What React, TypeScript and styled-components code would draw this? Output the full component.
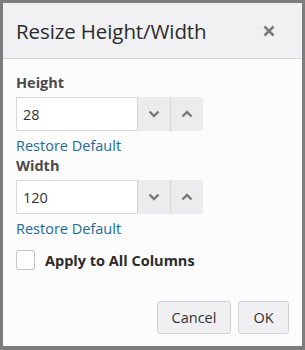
import React, { useState } from 'react'
import styled, { createGlobalStyle } from 'styled-components'

const GlobalStyle = createGlobalStyle`
  html, body {
    margin: 0;
    padding: 0;
    background: #7d7d7d;
  }
  body {
    font-family: 'Open Sans', 'Noto Sans', sans-serif;
    width: 305px;
    height: 350px;
    overflow: hidden;
  }
`

const Backdrop = styled.div`
  box-sizing: border-box;
  width: 305px;
  height: 350px;
  padding: 3px 3px 4px 3px;
`

const Dialog = styled.div`
  box-sizing: border-box;
  height: 100%;
  background: #fcfcfd;
  display: flex;
  flex-direction: column;
`

const Header = styled.div`
  box-sizing: border-box;
  height: 56px;
  background: #f1f1f3;
  border-bottom: 1px solid #d6d6d8;
  display: flex;
  align-items: center;
  justify-content: space-between;
  padding: 0 27px 0 13px;
`

const Title = styled.div`
  font-size: 20.5px;
  color: #2b2b2b;
  letter-spacing: -0.1px;
`

const CloseButton = styled.button`
  border: none;
  background: none;
  padding: 0;
  width: 12px;
  height: 12px;
  display: flex;
  cursor: pointer;
`

const Body = styled.div`
  flex: 1;
  padding: 14px 13px 0 13px;
  display: flex;
  flex-direction: column;
`

const Label = styled.div`
  font-size: 14.5px;
  font-weight: 700;
  color: #4b4b4b;
  line-height: 20px;
  margin-bottom: 4px;
`

const SpinRow = styled.div`
  display: flex;
  width: 187px;
  height: 34px;
`

const SpinInput = styled.input`
  box-sizing: border-box;
  width: 121px;
  height: 34px;
  border: 1px solid #d9d9d9;
  border-right: none;
  background: #fff;
  font-family: inherit;
  font-size: 14.5px;
  color: #333;
  padding: 0 6px;
  outline: none;
`

const SpinButton = styled.button<{ $last?: boolean }>`
  box-sizing: border-box;
  width: 33px;
  height: 34px;
  background: #ececee;
  border: none;
  border-left: 1px solid #d6d6d8;
  border-radius: ${(p) => (p.$last ? '0 3px 3px 0' : '0')};
  display: flex;
  align-items: center;
  justify-content: center;
  padding: 0;
  cursor: pointer;
`

const RestoreLink = styled.a`
  font-size: 14.5px;
  color: #226a96;
  text-decoration: none;
  line-height: 20px;
  margin-top: 5px;
  cursor: pointer;
`

const CheckRow = styled.label`
  display: flex;
  align-items: center;
  gap: 10px;
  margin-top: 11px;
  cursor: pointer;
`

const CheckBox = styled.span`
  box-sizing: border-box;
  width: 19px;
  height: 20px;
  border: 1px solid #c6c6c6;
  border-radius: 2px;
  background: #fff;
`

const CheckLabel = styled.span`
  font-size: 14.5px;
  font-weight: 700;
  color: #2b2b2b;
`

const Footer = styled.div`
  display: flex;
  justify-content: flex-end;
  gap: 7px;
  padding: 0 13px 12px 0;
`

const FooterButton = styled.button<{ $width: number }>`
  box-sizing: border-box;
  width: ${(p) => p.$width}px;
  height: 33px;
  background: #f0f0f2;
  border: 1px solid #d2d2d4;
  border-radius: 3px;
  font-family: inherit;
  font-size: 14.5px;
  color: #333;
  cursor: pointer;
`

const Chevron = ({ up }: { up?: boolean }) => (
  <svg width="12" height="8" viewBox="0 0 12 8">
    <path
      d={up ? 'M1.5 6.5 L6 2 L10.5 6.5' : 'M1.5 1.5 L6 6 L10.5 1.5'}
      fill="none"
      stroke="#777"
      strokeWidth="2.4"
    />
  </svg>
)

const Spinner = ({ value }: { value: string }) => (
  <SpinRow>
    <SpinInput defaultValue={value} />
    <SpinButton>
      <Chevron />
    </SpinButton>
    <SpinButton $last>
      <Chevron up />
    </SpinButton>
  </SpinRow>
)

const App = () => {
  const [checked] = useState(false)

  return (
    <Backdrop>
      <GlobalStyle />
      <Dialog>
        <Header>
          <Title>Resize Height/Width</Title>
          <CloseButton aria-label="Close">
            <svg width="12" height="12" viewBox="0 0 12 12">
              <path d="M1.5 1.5 L10.5 10.5 M10.5 1.5 L1.5 10.5" stroke="#7a7a7a" strokeWidth="2.6" />
            </svg>
          </CloseButton>
        </Header>
        <Body>
          <Label>Height</Label>
          <Spinner value="28" />
          <RestoreLink>Restore Default</RestoreLink>
          <Label>Width</Label>
          <Spinner value="120" />
          <RestoreLink>Restore Default</RestoreLink>
          <CheckRow>
            <CheckBox aria-checked={checked} />
            <CheckLabel>Apply to All Columns</CheckLabel>
          </CheckRow>
        </Body>
        <Footer>
          <FooterButton $width={74}>Cancel</FooterButton>
          <FooterButton $width={51}>OK</FooterButton>
        </Footer>
      </Dialog>
    </Backdrop>
  )
}

export default App
